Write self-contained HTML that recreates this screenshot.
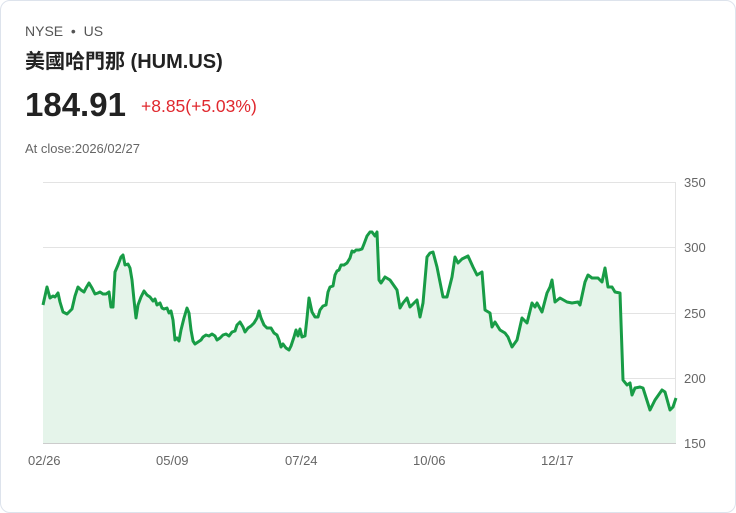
<!DOCTYPE html>
<html><head><meta charset="utf-8"><style>
body{margin:0;width:736px;height:513px;background:#fff;font-family:"Liberation Sans","Noto Sans CJK TC",sans-serif;overflow:hidden}
.card{position:absolute;left:0;top:0;width:734px;height:511px;border:1px solid #dde3ec;border-radius:10px;background:#fff}
.t{position:absolute;white-space:nowrap}
</style></head><body>
<div class="card"></div>
<div class="t" style="left:25px;top:23px;font-size:14px;color:#555">NYSE &nbsp;•&nbsp; US</div>
<div class="t" style="left:25px;top:45px;font-size:20px;font-weight:bold;color:#222">美國哈門那 (HUM.US)</div>
<div class="t" style="left:25px;top:86px;font-size:33px;font-weight:bold;color:#222">184.91</div>
<div class="t" style="left:141px;top:96px;font-size:17.5px;color:#e0282e">+8.85(+5.03%)</div>
<div class="t" style="left:25px;top:141px;font-size:13px;color:#666">At close:2026/02/27</div>
<svg width="736" height="513" style="position:absolute;left:0;top:0">
<g stroke="#e3e3e3" stroke-width="1">
<line x1="43" y1="182.5" x2="676" y2="182.5"/><line x1="43" y1="247.5" x2="676" y2="247.5"/><line x1="43" y1="313.5" x2="676" y2="313.5"/><line x1="43" y1="378.5" x2="676" y2="378.5"/><line x1="43" y1="443.5" x2="676" y2="443.5" stroke="#ccc"/>
<line x1="675.5" y1="182" x2="675.5" y2="443"/>
</g>
<g font-size="13" fill="#666" font-family="Liberation Sans,sans-serif">
<text x="684" y="187">350</text><text x="684" y="252">300</text><text x="684" y="318">250</text><text x="684" y="383">200</text><text x="684" y="448">150</text>
<text x="28" y="465">02/26</text><text x="156" y="465">05/09</text><text x="285" y="465">07/24</text><text x="413" y="465">10/06</text><text x="541" y="465">12/17</text>
</g>
<polyline fill="#e5f4ea" stroke="none" points="43,443 43,305 47,287 50,298 53,296 55,297 58,293 60,302 63,312 67,314 70,311 72,309 75,296 78,287 81,290 84,292 86,288 89,283 92,288 95,294 98,293 100,292 103,294 106,294 109,292 111,307 113,307 115,272 118,265 121,257 123,255 125,265 128,264 130,268 132,280 134,300 136,318 138,305 141,297 144,291 147,295 150,297 153,301 155,299 157,305 160,303 162,308 164,309 167,308 169,313 171,311 173,320 175,340 177,338 179,341 181,330 184,318 187,308 189,313 191,330 193,341 195,344 198,342 201,340 203,337 206,335 209,336 212,334 215,336 217,340 220,338 223,335 226,334 229,336 232,332 235,331 237,325 240,322 243,327 245,332 248,328 251,326 254,323 257,318 259,311 261,318 264,325 267,328 271,328 274,333 277,335 279,340 281,347 283,344 286,348 289,350 291,346 294,337 296,330 298,336 300,329 302,337 305,336 307,318 309,298 312,312 315,317 318,317 320,310 323,306 326,305 328,292 330,287 333,286 335,275 337,271 339,270 341,265 344,265 347,263 350,258 352,251 354,252 356,250 359,250 362,249 364,244 367,236 370,232 372,232 375,236 377,232 379,280 381,283 385,277 390,280 397,290 400,308 403,303 407,298 410,307 417,300 420,317 423,303 427,257 430,253 433,252 437,267 443,297 447,297 452,277 455,257 458,263 462,259 468,256 473,267 477,275 482,272 485,310 490,313 492,327 495,322 500,330 505,333 508,337 512,347 517,340 522,318 527,323 532,303 535,307 537,303 542,312 547,293 550,287 552,280 555,302 560,298 567,302 572,303 578,302 580,305 585,282 588,275 592,278 598,278 602,282 605,268 608,287 612,287 615,292 620,293 623,380 627,385 630,383 632,395 635,388 640,387 643,388 650,410 655,400 662,390 665,392 670,410 673,407 676,398 676,443"/>
<polyline fill="none" stroke="#189c46" stroke-width="3" stroke-linejoin="round" points="43,305 47,287 50,298 53,296 55,297 58,293 60,302 63,312 67,314 70,311 72,309 75,296 78,287 81,290 84,292 86,288 89,283 92,288 95,294 98,293 100,292 103,294 106,294 109,292 111,307 113,307 115,272 118,265 121,257 123,255 125,265 128,264 130,268 132,280 134,300 136,318 138,305 141,297 144,291 147,295 150,297 153,301 155,299 157,305 160,303 162,308 164,309 167,308 169,313 171,311 173,320 175,340 177,338 179,341 181,330 184,318 187,308 189,313 191,330 193,341 195,344 198,342 201,340 203,337 206,335 209,336 212,334 215,336 217,340 220,338 223,335 226,334 229,336 232,332 235,331 237,325 240,322 243,327 245,332 248,328 251,326 254,323 257,318 259,311 261,318 264,325 267,328 271,328 274,333 277,335 279,340 281,347 283,344 286,348 289,350 291,346 294,337 296,330 298,336 300,329 302,337 305,336 307,318 309,298 312,312 315,317 318,317 320,310 323,306 326,305 328,292 330,287 333,286 335,275 337,271 339,270 341,265 344,265 347,263 350,258 352,251 354,252 356,250 359,250 362,249 364,244 367,236 370,232 372,232 375,236 377,232 379,280 381,283 385,277 390,280 397,290 400,308 403,303 407,298 410,307 417,300 420,317 423,303 427,257 430,253 433,252 437,267 443,297 447,297 452,277 455,257 458,263 462,259 468,256 473,267 477,275 482,272 485,310 490,313 492,327 495,322 500,330 505,333 508,337 512,347 517,340 522,318 527,323 532,303 535,307 537,303 542,312 547,293 550,287 552,280 555,302 560,298 567,302 572,303 578,302 580,305 585,282 588,275 592,278 598,278 602,282 605,268 608,287 612,287 615,292 620,293 623,380 627,385 630,383 632,395 635,388 640,387 643,388 650,410 655,400 662,390 665,392 670,410 673,407 676,398"/>
</svg>
</body></html>
